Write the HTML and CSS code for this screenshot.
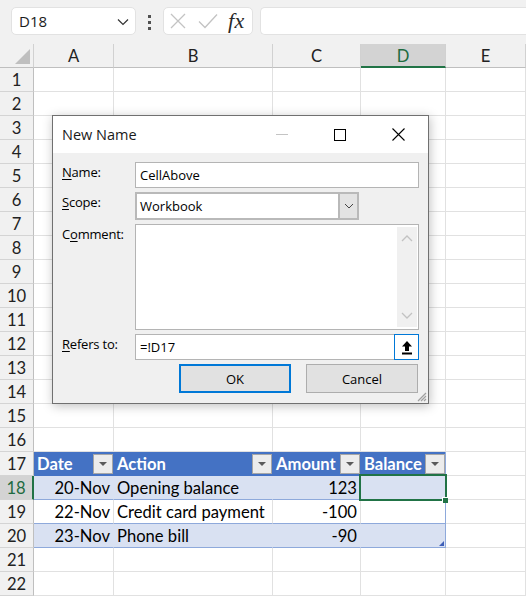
FILE: index.html
```html
<!DOCTYPE html>
<html>
<head>
<meta charset="utf-8">
<link rel="stylesheet" href="styles.css">
</head>
<body>
<div class="app">
  <div class="fbar">
    <div class="namebox">
      <span>D18</span>
      <svg class="chev" width="12" height="8" viewBox="0 0 12 8"><path d="M1 1.5 L6 6.5 L11 1.5" fill="none" stroke="#333" stroke-width="1.2"/></svg>
    </div>
    <div class="dots"><i></i><i></i><i></i></div>
    <div class="fxbox">
      <svg width="16" height="16" viewBox="0 0 16 16"><path d="M1 1 L15 15 M15 1 L1 15" stroke="#c3c3c3" stroke-width="1.3"/></svg>
      <svg width="20" height="16" viewBox="0 0 20 16"><path d="M1 8.5 L7 14.5 L19 1.5" fill="none" stroke="#c3c3c3" stroke-width="1.3"/></svg>
      <span class="fx">fx</span>
    </div>
    <div class="formula"></div>
  </div>

  <div class="sheet">
    <div class="r hdr">
      <div class="corner"><span class="tri"></span></div>
      <div class="ch">A</div><div class="ch">B</div><div class="ch">C</div><div class="ch csel">D</div><div class="ch">E</div>
    </div>
    <div class="r"><div class="rh">1</div><div class="c"></div><div class="c"></div><div class="c"></div><div class="c"></div><div class="c"></div></div>
    <div class="r"><div class="rh">2</div><div class="c"></div><div class="c"></div><div class="c"></div><div class="c"></div><div class="c"></div></div>
    <div class="r"><div class="rh">3</div><div class="c"></div><div class="c"></div><div class="c"></div><div class="c"></div><div class="c"></div></div>
    <div class="r"><div class="rh">4</div><div class="c"></div><div class="c"></div><div class="c"></div><div class="c"></div><div class="c"></div></div>
    <div class="r"><div class="rh">5</div><div class="c"></div><div class="c"></div><div class="c"></div><div class="c"></div><div class="c"></div></div>
    <div class="r"><div class="rh">6</div><div class="c"></div><div class="c"></div><div class="c"></div><div class="c"></div><div class="c"></div></div>
    <div class="r"><div class="rh">7</div><div class="c"></div><div class="c"></div><div class="c"></div><div class="c"></div><div class="c"></div></div>
    <div class="r"><div class="rh">8</div><div class="c"></div><div class="c"></div><div class="c"></div><div class="c"></div><div class="c"></div></div>
    <div class="r"><div class="rh">9</div><div class="c"></div><div class="c"></div><div class="c"></div><div class="c"></div><div class="c"></div></div>
    <div class="r"><div class="rh">10</div><div class="c"></div><div class="c"></div><div class="c"></div><div class="c"></div><div class="c"></div></div>
    <div class="r"><div class="rh">11</div><div class="c"></div><div class="c"></div><div class="c"></div><div class="c"></div><div class="c"></div></div>
    <div class="r"><div class="rh">12</div><div class="c"></div><div class="c"></div><div class="c"></div><div class="c"></div><div class="c"></div></div>
    <div class="r"><div class="rh">13</div><div class="c"></div><div class="c"></div><div class="c"></div><div class="c"></div><div class="c"></div></div>
    <div class="r"><div class="rh">14</div><div class="c"></div><div class="c"></div><div class="c"></div><div class="c"></div><div class="c"></div></div>
    <div class="r"><div class="rh">15</div><div class="c"></div><div class="c"></div><div class="c"></div><div class="c"></div><div class="c"></div></div>
    <div class="r"><div class="rh">16</div><div class="c tabtop"></div><div class="c tabtop"></div><div class="c tabtop"></div><div class="c tabtop"></div><div class="c"></div></div>
    <div class="r">
      <div class="rh">17</div>
      <div class="c th"><span>Date</span><b class="flt"></b></div>
      <div class="c th"><span>Action</span><b class="flt"></b></div>
      <div class="c th"><span>Amount</span><b class="flt"></b></div>
      <div class="c th last"><span>Balance</span><b class="flt"></b></div>
      <div class="c"></div>
    </div>
    <div class="r">
      <div class="rh rsel">18</div>
      <div class="c tb band num">20-Nov</div>
      <div class="c tb band">Opening balance</div>
      <div class="c tb band num">123</div>
      <div class="c tb band last active"></div>
      <div class="c"></div>
    </div>
    <div class="r">
      <div class="rh">19</div>
      <div class="c tb num">22-Nov</div>
      <div class="c tb">Credit card payment</div>
      <div class="c tb num">-100</div>
      <div class="c tb last"></div>
      <div class="c"></div>
    </div>
    <div class="r">
      <div class="rh">20</div>
      <div class="c tb band num">23-Nov</div>
      <div class="c tb band">Phone bill</div>
      <div class="c tb band num">-90</div>
      <div class="c tb band last endcell"></div>
      <div class="c"></div>
    </div>
    <div class="r"><div class="rh">21</div><div class="c"></div><div class="c"></div><div class="c"></div><div class="c"></div><div class="c"></div></div>
    <div class="r"><div class="rh">22</div><div class="c"></div><div class="c"></div><div class="c"></div><div class="c"></div><div class="c"></div></div>
  </div>

  <div class="dialog">
    <div class="titlebar">
      <span class="title">New Name</span>
      <span class="tbtn"><i class="minl"></i></span>
      <span class="tbtn"><i class="maxsq"></i></span>
      <span class="tbtn">
        <svg width="13" height="13" viewBox="0 0 13 13"><path d="M0.5 0.5 L12.5 12.5 M12.5 0.5 L0.5 12.5" stroke="#000" stroke-width="1.1"/></svg>
      </span>
    </div>
    <div class="dbody">
      <label class="lbl"><u>N</u>ame:</label>
      <div class="field"><span class="ftext">CellAbove</span></div>

      <label class="lbl"><u>S</u>cope:</label>
      <div class="select">
        <span class="ftext">Workbook</span>
        <span class="ddbtn"><svg width="10" height="6" viewBox="0 0 10 6"><path d="M1 1 L5 5 L9 1" fill="none" stroke="#444" stroke-width="1"/></svg></span>
      </div>

      <label class="lbl">C<u>o</u>mment:</label>
      <div class="field tarea">
        <span class="tspace"></span>
        <span class="vscroll">
          <svg width="12" height="8" viewBox="0 0 12 8"><path d="M1 7 L6 2 L11 7" fill="none" stroke="#c2c2c2" stroke-width="1.3"/></svg>
          <svg width="12" height="8" viewBox="0 0 12 8"><path d="M1 1 L6 6 L11 1" fill="none" stroke="#c2c2c2" stroke-width="1.3"/></svg>
        </span>
      </div>

      <label class="lbl"><u>R</u>efers to:</label>
      <div class="field refers">
        <span class="ftext">=!D17</span>
        <span class="rbtn"><svg width="12" height="15" viewBox="0 0 12 15"><path d="M6 1 L11 6.5 L8 6.5 L8 11 L4 11 L4 6.5 L1 6.5 Z" fill="#000"/><rect x="1" y="12.5" width="10" height="2" fill="#000"/></svg></span>
      </div>

      <div class="btnrow">
        <span class="btn ok">OK</span>
        <span class="btn">Cancel</span>
      </div>
    </div>
    <svg class="grip" width="12" height="12" viewBox="0 0 12 12"><path d="M11 3 L3 11 M11 6 L6 11 M11 9 L9 11" stroke="#a0a0a0" stroke-width="1.2"/></svg>
  </div>
</div>
</body>
</html>
```

FILE: styles.css
```css
html, body {
  margin: 0;
  padding: 0;
}
body {
  background: #ffffff;
  font-family: "Lato", "Liberation Sans", sans-serif;
}
.app {
  position: relative;
  width: 526px;
  height: 596px;
  overflow: hidden;
}

/* formula bar */
.fbar {
  height: 44px;
  box-sizing: border-box;
  background: #f1f1f1;
  display: flex;
  align-items: flex-start;
  padding-top: 7px;
  padding-left: 11px;
}
.namebox {
  width: 125px;
  height: 28px;
  box-sizing: border-box;
  background: #fff;
  border: 1px solid #e2e2e2;
  border-radius: 5px;
  display: flex;
  align-items: center;
  justify-content: space-between;
  padding: 0 6px 0 7px;
  font-family: "Open Sans", "Noto Sans", sans-serif;
  font-size: 15px;
  color: #1b1b1b;
}
.chev { margin-top: 1px; }
.dots {
  width: 27px;
  display: flex;
  flex-direction: column;
  align-items: center;
  gap: 3px;
  padding-top: 8px;
}
.dots i {
  display: block;
  width: 3px;
  height: 3px;
  background: #505050;
}
.fxbox {
  width: 90px;
  height: 28px;
  box-sizing: border-box;
  background: #fff;
  border: 1px solid #e2e2e2;
  border-radius: 5px;
  display: flex;
  align-items: center;
  padding-left: 6px;
  gap: 12px;
}
.fx {
  font-family: "Liberation Serif", "DejaVu Serif", serif;
  font-style: italic;
  font-size: 22px;
  color: #2a2a2a;
  margin-left: -2px;
  letter-spacing: 0.5px;
}
.formula {
  margin-left: 7px;
  flex: 1;
  height: 28px;
  box-sizing: border-box;
  background: #fff;
  border: 1px solid #e2e2e2;
  border-right: none;
  border-radius: 5px 0 0 5px;
}

/* sheet */
.r {
  display: grid;
  grid-template-columns: 34px 80px 159px 88px 85px 80px;
  height: 24px;
}
.r > div {
  box-sizing: border-box;
  height: 24px;
  border-right: 1px solid #e1e1e1;
  border-bottom: 1px solid #e1e1e1;
  font-size: 16.6px;
  line-height: 24px;
  color: #000;
  white-space: nowrap;
  overflow: hidden;
}
.hdr > div {
  background: #f1f1f1;
  border-right-color: #d1d1d1;
  border-bottom-color: #bfbfbf;
  text-align: center;
  color: #222;
}
.corner {
  position: relative;
}
.corner .tri {
  position: absolute;
  right: 3px;
  bottom: 3px;
  width: 0;
  height: 0;
  border-left: 15px solid transparent;
  border-bottom: 15px solid #bfbfbf;
}
.hdr > .csel {
  background: #d3d3d3;
  color: #1e6b40;
  border-bottom: 2px solid #217346;
}
.r > .rh {
  background: #f1f1f1;
  border-right-color: #bfbfbf;
  border-bottom-color: #d4d4d4;
  text-align: center;
  color: #222;
}
.r > .rsel {
  background: #d3d3d3;
  color: #1e6b40;
  border-right: 2px solid #217346;
}
.r > .c { padding: 0 3px; }
.r > .tabtop { border-bottom-color: #e1e1e1; }

.r > .th {
  background: #4472c4;
  color: #fff;
  font-weight: 700;
  border-right-color: #4472c4;
  border-bottom-color: #4472c4;
  display: flex;
  align-items: center;
  justify-content: space-between;
  padding: 0 0 0 3px;
}
.r > .th.last { border-right-color: #8ea9db; }
.flt {
  width: 20px;
  height: 20px;
  box-sizing: border-box;
  background: #ececec;
  border: 1px solid #a6a6a6;
  position: relative;
  flex: none;
  margin-top: 1px;
}
.flt::after {
  content: "";
  position: absolute;
  left: 5px;
  top: 7px;
  border-left: 4px solid transparent;
  border-right: 4px solid transparent;
  border-top: 4px solid #5a5a5a;
}
.r > .tb {
  border-bottom-color: #8ea9db;
}
.r > .band {
  background: #d9e1f2;
  border-right-color: #d9e1f2;
}
.r > .tb.last { border-right-color: #8ea9db; }
.r > .num { text-align: right; }
.r > .active,
.r > .endcell {
  position: relative;
  overflow: visible;
}
.active::before {
  content: "";
  position: absolute;
  left: -2px;
  top: -2px;
  right: -2px;
  bottom: -2px;
  border: 2px solid #217346;
  z-index: 2;
}
.active::after {
  content: "";
  position: absolute;
  right: -3px;
  bottom: -4px;
  width: 5px;
  height: 5px;
  background: #217346;
  border: 1px solid #fff;
  border-right: none;
  border-bottom: none;
  z-index: 3;
}
.endcell::after {
  content: "";
  position: absolute;
  right: 1px;
  bottom: 1px;
  width: 0;
  height: 0;
  border-left: 5px solid transparent;
  border-bottom: 5px solid #3f5fb8;
}

/* dialog */
.dialog {
  position: absolute;
  left: 52px;
  top: 115px;
  width: 377px;
  height: 289px;
  box-sizing: border-box;
  border: 1px solid #707070;
  background: #f0f0f0;
  box-shadow: 1px 2px 10px rgba(0, 0, 0, 0.25);
  font-family: "Open Sans", "Noto Sans", sans-serif;
  font-size: 13px;
  color: #000;
  z-index: 10;
}
.titlebar {
  height: 37px;
  background: #fff;
  display: flex;
  align-items: center;
}
.title {
  flex: 1;
  padding-left: 9px;
  font-size: 14.5px;
  color: #1a1a1a;
}
.tbtn {
  width: 58px;
  height: 37px;
  display: flex;
  align-items: center;
  justify-content: center;
}
.tbtn:last-child { margin-right: 1px; }
.minl {
  display: block;
  width: 12px;
  height: 1px;
  background: #c4c4c4;
}
.maxsq {
  display: block;
  width: 10px;
  height: 10px;
  border: 1px solid #000;
}
.dbody {
  display: grid;
  grid-template-columns: 73px 284px;
  grid-template-rows: 26px 28px 106px 26px 29px;
  row-gap: 4px;
  padding: 9px 9px 10px 9px;
}
.lbl {
  line-height: 18px;
  padding-top: 1px;
  color: #000;
  letter-spacing: -0.2px;
}
.lbl u { text-decoration-thickness: 1px; text-underline-offset: 2px; }
.field {
  box-sizing: border-box;
  background: #fff;
  border: 1px solid #b4b4b4;
  display: flex;
  align-items: center;
}
.ftext { padding-left: 4px; flex: 1; }
.select {
  width: 224px;
  box-sizing: border-box;
  background: #fff;
  border: 2px solid #b9b9b9;
  display: flex;
  align-items: center;
}
.select .ftext { padding-left: 3px; }
.ddbtn {
  width: 19px;
  height: 100%;
  box-sizing: border-box;
  background: #e3e3e3;
  border-left: 2px solid #b9b9b9;
  display: flex;
  align-items: center;
  justify-content: center;
}
.tarea { align-items: stretch; }
.tspace { flex: 1; }
.vscroll {
  width: 20px;
  margin: 2px 1px 2px 0;
  background: #f0f0f0;
  display: flex;
  flex-direction: column;
  justify-content: space-between;
  align-items: center;
  padding: 7px 0;
}
.refers { align-items: stretch; }
.refers .ftext { display: flex; align-items: center; }
.rbtn {
  width: 25px;
  margin: -1px -1px -1px 0;
  box-sizing: border-box;
  border: 1px solid #0078d7;
  background: #fff;
  display: flex;
  align-items: center;
  justify-content: center;
}
.btnrow {
  grid-column: 1 / 3;
  display: flex;
  justify-content: flex-end;
  gap: 15px;
  padding-right: 1px;
}
.btn {
  width: 112px;
  height: 29px;
  box-sizing: border-box;
  background: #e1e1e1;
  border: 1px solid #adadad;
  display: flex;
  align-items: center;
  justify-content: center;
}
.btn.ok { border: 2px solid #0078d7; }
.grip {
  position: absolute;
  right: 1px;
  bottom: 1px;
}
```
